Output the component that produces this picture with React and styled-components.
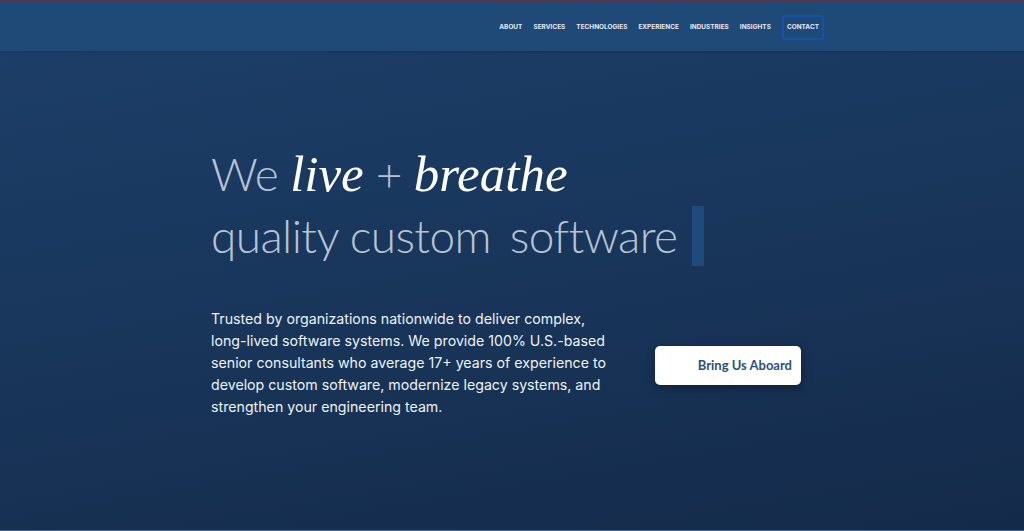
import React from "react";
import styled, { createGlobalStyle } from "styled-components";

const GlobalStyle = createGlobalStyle`
  html, body {
    margin: 0;
    padding: 0;
    height: 100%;
  }
  body {
    background: #152b4b;
    font-family: "Open Sans", "Liberation Sans", sans-serif;
  }
`;

const Page = styled.div`
  width: 100%;
  height: 531px;
  display: flex;
  flex-direction: column;
  border-top: 1px solid #5a3444;
  border-bottom: 1px solid #4a6588;
  box-sizing: border-box;
  background: linear-gradient(170deg, #1d3f6a 0%, #183559 55%, #142a4a 100%);
  overflow: hidden;
`;

const Header = styled.header`
  height: 50px;
  background: #1f4a78;
  display: flex;
  align-items: center;
  justify-content: flex-end;
  padding: 2px 200px 0 0;
  box-sizing: border-box;
  box-shadow: 0 1px 3px rgba(0, 0, 0, 0.15);
`;

const Nav = styled.nav`
  display: flex;
  align-items: center;
  gap: 11px;
`;

const NavLink = styled.a`
  font-family: "Inter", "Liberation Sans", sans-serif;
  font-size: 6.4px;
  font-weight: 700;
  letter-spacing: 0.05px;
  text-transform: uppercase;
  color: #e6ecf4;
  text-decoration: none;
  padding: ${(p) => (p.$boxed ? "6px 3px 7px" : "0")};
  border: ${(p) => (p.$boxed ? "2px solid #1553aa" : "none")};
  border-radius: 3px;
`;

const Hero = styled.main`
  flex: 1;
  padding: 92px 0 0 211px;
  display: flex;
  flex-direction: column;
`;

const Heading = styled.h1`
  margin: 0;
  font-family: "Lato", "Liberation Sans", sans-serif;
  font-weight: 300;
  font-size: 46px;
  line-height: 62px;
  color: #b7c3d3;
  letter-spacing: -0.6px;
`;

const Line = styled.span`
  display: flex;
  align-items: center;
  white-space: pre;
`;

const Gap = styled.span`
  display: inline-block;
  width: ${(p) => p.$w}px;
`;

const Script = styled.em`
  font-family: "Liberation Serif", serif;
  font-style: italic;
  font-size: 51px;
  color: #ffffff;
  letter-spacing: 0;
`;

const Caret = styled.span`
  display: inline-block;
  width: 12px;
  height: 60px;
  margin-left: 15px;
  background: #1f4a7c;
`;

const Body = styled.div`
  margin-top: 41px;
  display: flex;
  align-items: center;
  gap: 44px;
`;

const Lead = styled.p`
  margin: 0;
  width: 400px;
  white-space: nowrap;
  font-family: "Inter", "Liberation Sans", sans-serif;
  font-size: 14.2px;
  line-height: 22px;
  color: #eef2f7;
`;

const Cta = styled.button`
  width: 146px;
  height: 39px;
  margin-top: 4px;
  background: #ffffff;
  border: none;
  border-radius: 5px;
  box-shadow: 0 3px 8px rgba(0, 0, 0, 0.35);
  display: flex;
  align-items: center;
  justify-content: flex-end;
  padding: 0 9px 0 0;
  font-family: "Lato", "Liberation Sans", sans-serif;
  font-weight: 700;
  font-size: 13px;
  color: #2c4f82;
  cursor: pointer;
`;

const links = ["About", "Services", "Technologies", "Experience", "Industries", "Insights"];

const lead = [
  "Trusted by organizations nationwide to deliver complex,",
  "long-lived software systems. We provide 100% U.S.-based",
  "senior consultants who average 17+ years of experience to",
  "develop custom software, modernize legacy systems, and",
  "strengthen your engineering team.",
];

export default function App() {
  return (
    <>
      <GlobalStyle />
      <Page>
        <Header>
          <Nav>
            {links.map((l) => (
              <NavLink key={l} href="#">
                {l}
              </NavLink>
            ))}
            <NavLink href="#" $boxed>
              Contact
            </NavLink>
          </Nav>
        </Header>
        <Hero>
          <Heading>
            <Line>
              We <Script>live</Script> + <Script>breathe</Script>
            </Line>
            <Line>
              quality custom <Gap $w={7} />software
              <Caret />
            </Line>
          </Heading>
          <Body>
            <Lead>
              {lead.map((l, i) => (
                <React.Fragment key={i}>
                  {l}
                  {i < lead.length - 1 && <br />}
                </React.Fragment>
              ))}
            </Lead>
            <Cta>Bring Us Aboard</Cta>
          </Body>
        </Hero>
      </Page>
    </>
  );
}
